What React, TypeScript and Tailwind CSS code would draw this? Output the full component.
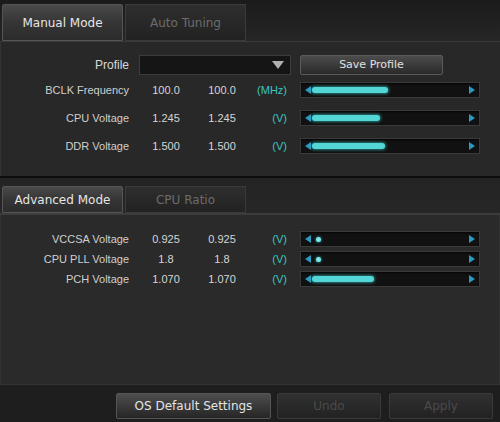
import React from "react";

const font = { fontFamily: '"DejaVu Sans", Verdana, sans-serif' };
const lfont = { fontFamily: '"Liberation Sans", Arial, sans-serif' };

function Slider({ fill, dot }: { fill?: number; dot?: boolean }) {
  return (
    <div className="relative w-[180px] h-[16px] bg-[#111111] border border-[#3a3a3a] shadow-[inset_0_1px_2px_rgba(0,0,0,0.8)] flex items-center">
      <svg width="6" height="8" viewBox="0 0 6 8" className="absolute left-[4px] top-[3px]">
        <polygon points="6,0 6,8 0,4" fill="#2a9ac0" />
      </svg>
      <svg width="6" height="8" viewBox="0 0 6 8" className="absolute right-[4px] top-[3px]">
        <polygon points="0,0 0,8 6,4" fill="#2a9ac0" />
      </svg>
      {dot ? (
        <div className="absolute left-[15px] top-[5px] w-[5px] h-[5px] rounded-full bg-[#7ee6e6] shadow-[0_0_3px_#3cc]" />
      ) : (
        <div
          className="absolute left-[11px] top-[4px] h-[6px] rounded-full bg-[#52d6d6] shadow-[0_0_3px_1px_rgba(60,200,200,0.6)]"
          style={{ width: fill }}
        />
      )}
    </div>
  );
}

function Row({
  label,
  v1,
  v2,
  unit,
  fill,
  dot,
  className = "",
}: {
  label: string;
  v1: string;
  v2: string;
  unit: string;
  fill?: number;
  dot?: boolean;
  className?: string;
}) {
  return (
    <div className={"flex items-center h-[16px] " + className} style={lfont}>
      <div className="w-[128px] text-right text-[11px] text-[#cfcfcf]">{label}</div>
      <div className="w-[74px] text-center text-[11px] text-[#d6d6d6]">{v1}</div>
      <div className="w-[38px] text-center text-[11px] text-[#d6d6d6]">{v2}</div>
      <div className="w-[46px] text-right text-[11px] text-[#3cc4c0]">{unit}</div>
      <div className="ml-[13px]">
        <Slider fill={fill} dot={dot} />
      </div>
    </div>
  );
}

function Tab({ label, active, h }: { label: string; active?: boolean; h: string }) {
  return (
    <div
      className={
        "w-[121px] flex items-center justify-center text-[12px] border " +
        h +
        " " +
        (active
          ? "bg-gradient-to-b from-[#4a4a4a] via-[#353535] to-[#2c2c2c] border-[#555555] text-[#e6e6e6] rounded-t-[2px]"
          : "bg-gradient-to-b from-[#2e2e2e] to-[#222222] border-[#3a3a3a] text-[#6c6c6c]")
      }
      style={font}
    >
      {label}
    </div>
  );
}

export default function App() {
  return (
    <div className="w-[500px] h-[422px] bg-[#1d1d1d] flex flex-col overflow-hidden">
      {/* Top tabs */}
      <div className="h-[42px] flex items-end gap-[2px] pl-[2px] bg-gradient-to-b from-[#1b1b1b] to-[#262626] border-b border-[#3a3a3a]">
        <Tab label="Manual Mode" active h="h-[37px]" />
        <Tab label="Auto Tuning" h="h-[37px]" />
      </div>
      {/* Panel 1 */}
      <div className="h-[134px] bg-[#282828] border-l border-[#333] pt-[13px] flex flex-col">
        <div className="flex items-center h-[20px]" style={lfont}>
          <div className="w-[128px] text-right text-[12px] text-[#d8d8d8]">Profile</div>
          <div className="ml-[10px] w-[152px] h-[20px] bg-[#151515] border border-[#3c3c3c] relative">
            <svg width="12" height="8" viewBox="0 0 12 8" className="absolute right-[6px] top-[5px]">
              <polygon points="0,0 12,0 6,8" fill="#b0b0b0" />
            </svg>
          </div>
          <div
            className="ml-[9px] w-[143px] h-[20px] flex items-center justify-center text-[11px] text-[#e0e0e0] border border-[#5a5a5a] rounded-[2px] bg-gradient-to-b from-[#4c4c4c] to-[#2a2a2a]"
            style={font}
          >
            Save Profile
          </div>
        </div>
        <Row label="BCLK Frequency" v1="100.0" v2="100.0" unit="(MHz)" fill={76} className="mt-[7px]" />
        <Row label="CPU Voltage" v1="1.245" v2="1.245" unit="(V)" fill={68} className="mt-[12px]" />
        <Row label="DDR Voltage" v1="1.500" v2="1.500" unit="(V)" fill={73} className="mt-[12px]" />
      </div>
      <div className="h-[2px] bg-[#0c0c0c]" />
      {/* Second tabs */}
      <div className="h-[37px] flex items-end gap-[2px] pl-[2px] bg-gradient-to-b from-[#242424] to-[#262626] border-b-2 border-[#3c3c3c]">
        <Tab label="Advanced Mode" active h="h-[27px]" />
        <Tab label="CPU Ratio" h="h-[27px]" />
      </div>
      {/* Panel 2 */}
      <div className="h-[170px] bg-[#2a2a2a] border-l border-r border-b border-[#333] pt-[16px] flex flex-col">
        <Row label="VCCSA Voltage" v1="0.925" v2="0.925" unit="(V)" dot />
        <Row label="CPU PLL Voltage" v1="1.8" v2="1.8" unit="(V)" dot className="mt-[4px]" />
        <Row label="PCH Voltage" v1="1.070" v2="1.070" unit="(V)" fill={62} className="mt-[4px]" />
      </div>
      {/* Bottom bar */}
      <div className="flex-1 flex items-start pt-[8px] pl-[116px] gap-[6px] bg-[#1e1e1e]">
        <div
          className="w-[155px] h-[26px] flex items-center justify-center text-[12px] text-[#e4e4e4] border border-[#555] rounded-[2px] bg-gradient-to-b from-[#4e4e4e] to-[#262626]"
          style={font}
        >
          OS Default Settings
        </div>
        <div
          className="w-[104px] h-[26px] flex items-center justify-center text-[12px] text-[#4a4a4a] border border-[#3a3a3a] rounded-[2px] bg-gradient-to-b from-[#303030] to-[#222222]"
          style={font}
        >
          Undo
        </div>
        <div
          className="w-[104px] h-[26px] ml-[2px] flex items-center justify-center text-[12px] text-[#4a4a4a] border border-[#3a3a3a] rounded-[2px] bg-gradient-to-b from-[#303030] to-[#222222]"
          style={font}
        >
          Apply
        </div>
      </div>
    </div>
  );
}
